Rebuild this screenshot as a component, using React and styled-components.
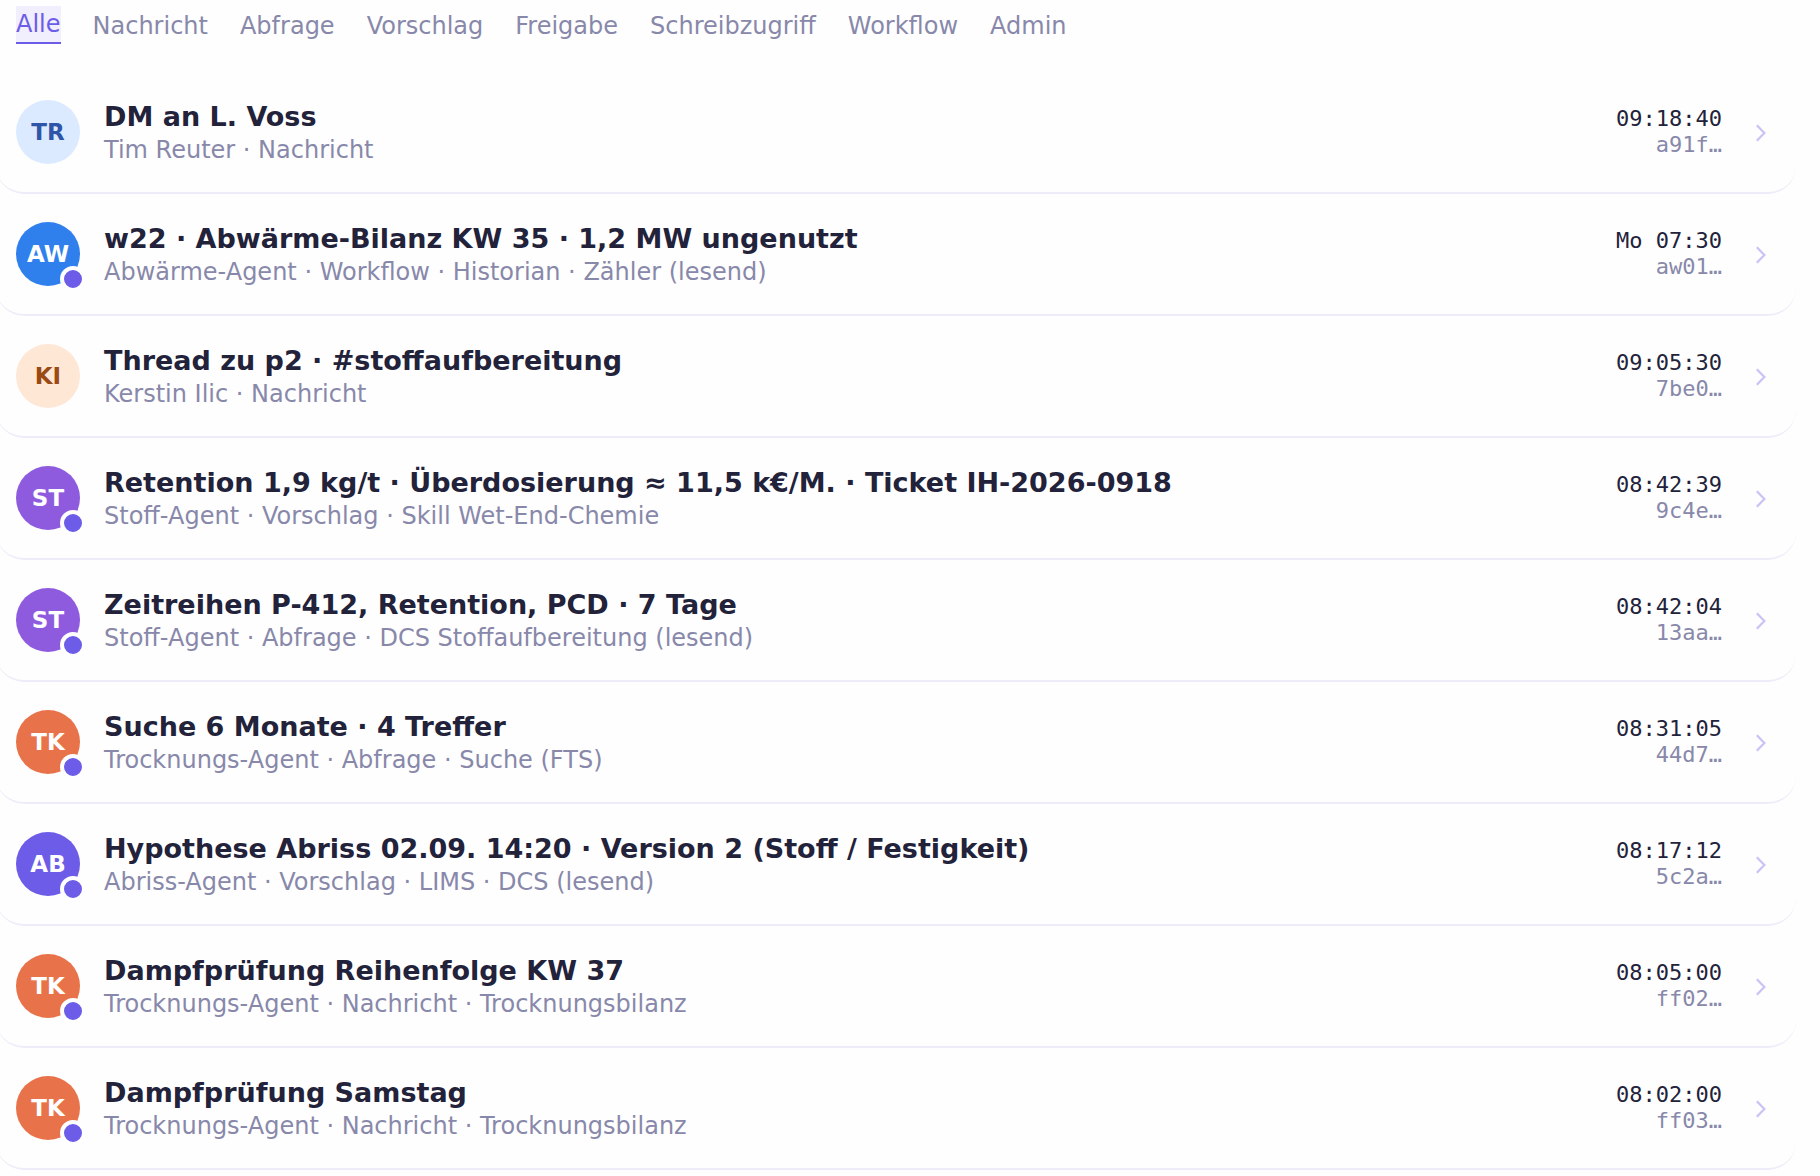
import React, { useState } from "react"
import styled, { createGlobalStyle } from "styled-components"

const GlobalStyle = createGlobalStyle`
  body {
    margin: 0;
    background: #fefefe;
    color: #22223a;
    font-family: "DejaVu Sans", sans-serif;
  }
`

const Page = styled.main`
  padding-top: 6px;
`

const Tabs = styled.nav`
  display: flex;
  align-items: flex-end;
  gap: 32px;
  height: 38px;
  padding: 0 16px;
  margin-bottom: 28px;
`

const Tab = styled.button`
  border: 0;
  border-bottom: ${props => (props.$active ? "2px solid #6c5ce7" : "0")};
  padding: 4px 0;
  background: ${props => (props.$active ? "#f1eefd" : "transparent")};
  color: ${props => (props.$active ? "#6c5ce7" : "#8888aa")};
  font-family: inherit;
  font-size: 24px;
  line-height: 28px;
  cursor: pointer;
`

const List = styled.ul`
  list-style: none;
  margin: 0 24px 0 -4px;
  padding: 0;
`

const Row = styled.button`
  display: flex;
  align-items: center;
  gap: 24px;
  width: 100%;
  min-height: 122px;
  padding: 20px;
  border: 0;
  border-bottom: 2px solid #eeecf8;
  border-radius: 28px;
  background: transparent;
  color: inherit;
  font-family: inherit;
  text-align: left;
  cursor: pointer;
`

const Avatar = styled.span`
  position: relative;
  display: flex;
  flex: none;
  align-items: center;
  justify-content: center;
  width: 64px;
  height: 64px;
  border-radius: 50%;
  background: ${props => props.$bg};
  color: ${props => props.$color};
  font-size: 23px;
  font-weight: 700;
`

const AgentDot = styled.span`
  position: absolute;
  right: -6px;
  bottom: -6px;
  width: 18px;
  height: 18px;
  border: 4px solid #fefefe;
  border-radius: 50%;
  background: #6c5ce7;
`

const Text = styled.span`
  display: flex;
  flex: 1;
  flex-direction: column;
  min-width: 0;
  padding-top: 2px;
`

const Title = styled.span`
  font-size: 27px;
  font-weight: 700;
  line-height: 34px;
`

const Subtitle = styled.span`
  color: #8888aa;
  font-size: 24px;
  line-height: 32px;
`

const Meta = styled.span`
  display: flex;
  flex-direction: column;
  font-family: "DejaVu Sans Mono", monospace;
  font-size: 22px;
  line-height: 26px;
  text-align: right;
`

const Hash = styled.span`
  color: #8888aa;
`

const ChevronIcon = styled.svg`
  flex: none;
  width: 30px;
  height: 30px;
  fill: none;
  stroke: #c9c2f5;
  stroke-width: 2.2;
`

const tabs = [
  "Alle",
  "Nachricht",
  "Abfrage",
  "Vorschlag",
  "Freigabe",
  "Schreibzugriff",
  "Workflow",
  "Admin",
]

const people = {
  TR: { bg: "#dceaff", color: "#2f55a8" },
  AW: { bg: "#2f80ed", color: "#fff", agent: true },
  KI: { bg: "#ffe7d6", color: "#9a4a12" },
  ST: { bg: "#8e5bdf", color: "#fff", agent: true },
  TK: { bg: "#e8734a", color: "#fff", agent: true },
  AB: { bg: "#6c5ce7", color: "#fff", agent: true },
}

const entries = [
  { who: "TR", title: "DM an L. Voss", sub: "Tim Reuter · Nachricht", time: "09:18:40", hash: "a91f…" },
  { who: "AW", title: "w22 · Abwärme-Bilanz KW 35 · 1,2 MW ungenutzt", sub: "Abwärme-Agent · Workflow · Historian · Zähler (lesend)", time: "Mo 07:30", hash: "aw01…" },
  { who: "KI", title: "Thread zu p2 · #stoffaufbereitung", sub: "Kerstin Ilic · Nachricht", time: "09:05:30", hash: "7be0…" },
  { who: "ST", title: "Retention 1,9 kg/t · Überdosierung ≈ 11,5 k€/M. · Ticket IH-2026-0918", sub: "Stoff-Agent · Vorschlag · Skill Wet-End-Chemie", time: "08:42:39", hash: "9c4e…" },
  { who: "ST", title: "Zeitreihen P-412, Retention, PCD · 7 Tage", sub: "Stoff-Agent · Abfrage · DCS Stoffaufbereitung (lesend)", time: "08:42:04", hash: "13aa…" },
  { who: "TK", title: "Suche 6 Monate · 4 Treffer", sub: "Trocknungs-Agent · Abfrage · Suche (FTS)", time: "08:31:05", hash: "44d7…" },
  { who: "AB", title: "Hypothese Abriss 02.09. 14:20 · Version 2 (Stoff / Festigkeit)", sub: "Abriss-Agent · Vorschlag · LIMS · DCS (lesend)", time: "08:17:12", hash: "5c2a…" },
  { who: "TK", title: "Dampfprüfung Reihenfolge KW 37", sub: "Trocknungs-Agent · Nachricht · Trocknungsbilanz", time: "08:05:00", hash: "ff02…" },
  { who: "TK", title: "Dampfprüfung Samstag", sub: "Trocknungs-Agent · Nachricht · Trocknungsbilanz", time: "08:02:00", hash: "ff03…" },
]

const Chevron = () => (
  <ChevronIcon viewBox="0 0 30 30" aria-hidden="true">
    <path d="M10.8 8.2 18.4 16l-7.6 7.8" />
  </ChevronIcon>
)

const Entry = ({ who, title, sub, time, hash }) => {
  const person = people[who]

  return (
    <li>
      <Row type="button">
        <Avatar $bg={person.bg} $color={person.color}>
          {who}
          {person.agent && <AgentDot />}
        </Avatar>
        <Text>
          <Title>{title}</Title>
          <Subtitle>{sub}</Subtitle>
        </Text>
        <Meta>
          <span>{time}</span>
          <Hash>{hash}</Hash>
        </Meta>
        <Chevron />
      </Row>
    </li>
  )
}

export default function App() {
  const [active, setActive] = useState("Alle")

  return (
    <Page>
      <GlobalStyle />
      <Tabs>
        {tabs.map(tab => (
          <Tab
            key={tab}
            type="button"
            $active={tab === active}
            onClick={() => setActive(tab)}
          >
            {tab}
          </Tab>
        ))}
      </Tabs>
      <List>
        {entries.map(entry => (
          <Entry key={entry.hash} {...entry} />
        ))}
      </List>
    </Page>
  )
}
